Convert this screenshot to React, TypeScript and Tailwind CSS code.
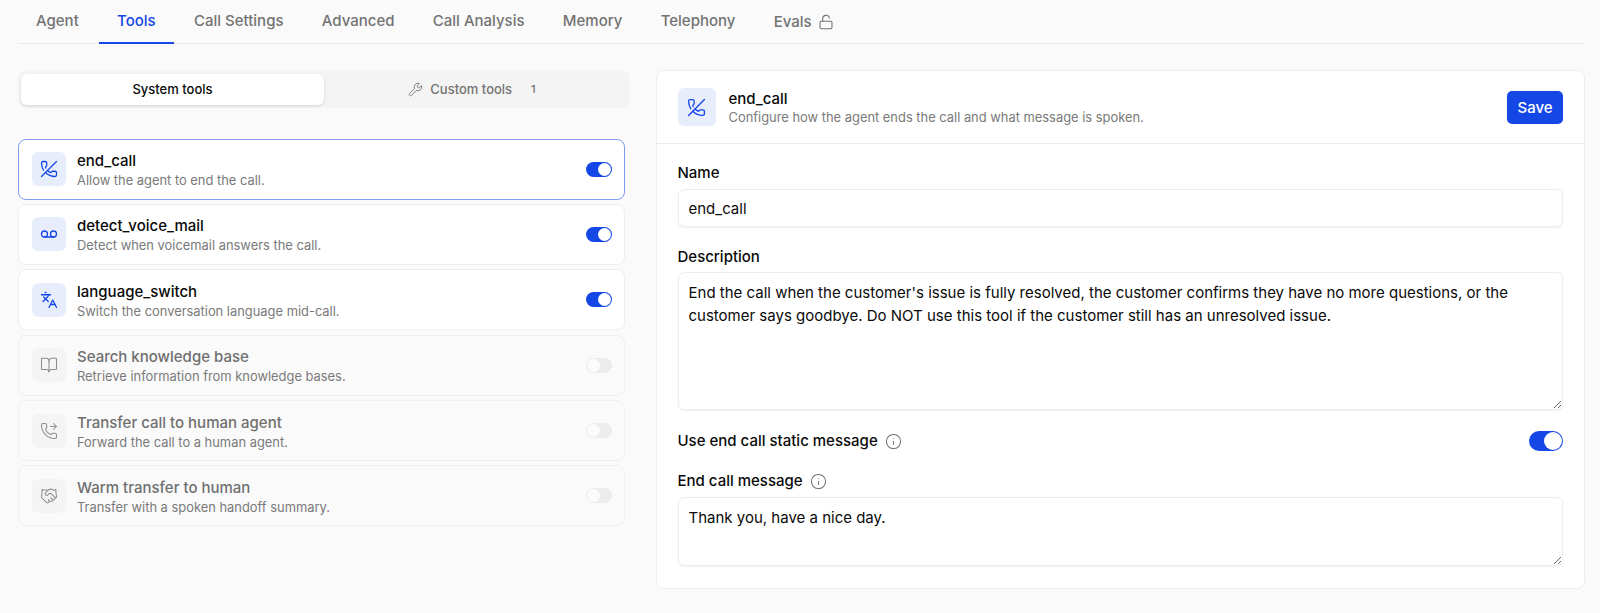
import { FC, ReactNode } from 'react';
import {
  BookOpen,
  Handshake,
  Info,
  Languages,
  LockOpen,
  PhoneForwarded,
  PhoneOff,
  Voicemail,
  Wrench,
} from 'lucide-react';

const tabs = ['Agent', 'Tools', 'Call Settings', 'Advanced', 'Call Analysis', 'Memory', 'Telephony'];

interface Tool {
  name: string;
  description: string;
  icon: ReactNode;
  enabled: boolean;
  selected?: boolean;
}

const tools: Tool[] = [
  { name: 'end_call', description: 'Allow the agent to end the call.', icon: <PhoneOff size={18} strokeWidth={1.7} />, enabled: true, selected: true },
  { name: 'detect_voice_mail', description: 'Detect when voicemail answers the call.', icon: <Voicemail size={18} strokeWidth={1.7} />, enabled: true },
  { name: 'language_switch', description: 'Switch the conversation language mid-call.', icon: <Languages size={18} strokeWidth={1.7} />, enabled: true },
  { name: 'Search knowledge base', description: 'Retrieve information from knowledge bases.', icon: <BookOpen size={18} strokeWidth={1.4} />, enabled: false },
  { name: 'Transfer call to human agent', description: 'Forward the call to a human agent.', icon: <PhoneForwarded size={18} strokeWidth={1.4} />, enabled: false },
  { name: 'Warm transfer to human', description: 'Transfer with a spoken handoff summary.', icon: <Handshake size={18} strokeWidth={1.4} />, enabled: false },
];

const SmallToggle: FC<{ on: boolean }> = ({ on }) =>
  on ? (
    <div className="flex h-[15px] w-[26px] items-center justify-end rounded-full bg-[#1447e6] p-px">
      <div className="h-[13px] w-[13px] rounded-full bg-white" />
    </div>
  ) : (
    <div className="flex h-[15px] w-[26px] items-center rounded-full bg-[#ececec] p-px">
      <div className="h-[13px] w-[13px] rounded-full bg-[#fbfbfb]" />
    </div>
  );

const ToolCard: FC<{ tool: Tool }> = ({ tool }) => (
  <div
    className={`flex h-[61px] items-center rounded-lg border pl-[13px] pr-[12px] ${
      tool.selected
        ? 'border-[#7f9cf0] bg-white'
        : tool.enabled
          ? 'border-[#eeeeee] bg-white'
          : 'border-[#f0f0f0] bg-[#fafafa]'
    }`}
  >
    <div
      className={`flex h-[34px] w-[34px] items-center justify-center rounded-md ${
        tool.enabled ? 'bg-[#e8edfc] text-[#1447e6]' : 'bg-[#f4f4f4] text-[#8e8e8e]'
      }`}
    >
      {tool.icon}
    </div>
    <div className="ml-[11px] flex-1 pt-[4px]">
      <div className={`text-[15px] font-medium leading-[19px] ${tool.enabled ? 'text-[#0a0a0a]' : 'text-[#6f6f6f]'}`}>
        {tool.name}
      </div>
      <div className="mt-px text-[12.9px] leading-[20px] text-[#7a7a7a]">{tool.description}</div>
    </div>
    <SmallToggle on={tool.enabled} />
  </div>
);

const App: FC = () => {
  return (
    <div className="h-[613px] w-[1600px] overflow-hidden bg-[#fafafa] pl-[18px] pr-[15px] font-['Inter',sans-serif]">
      <div className="flex h-[44px] gap-[2.3px] border-b border-[#ebebeb]">
        {tabs.map((tab) => (
          <div
            key={tab}
            className={`-mb-px flex h-[44px] items-center border-b-2 px-[18px] text-[15px] font-medium ${
              tab === 'Tools' ? 'border-[#1447e6] text-[#1447e6]' : 'border-transparent text-[#737373]'
            }`}
          >
            {tab}
          </div>
        ))}
        <div className="flex h-[44px] items-center gap-[6px] px-[18px] text-[15px] font-medium text-[#737373]">
          Evals
          <LockOpen size={16} strokeWidth={1.6} />
        </div>
      </div>

      <div className="mt-[26px] flex gap-[25.5px]">
        <div className="w-[612px]">
          <div className="flex h-[38px] items-center rounded-lg bg-[#f4f4f4] p-[3px]">
            <div className="flex h-[31px] w-[303px] items-center justify-center rounded-md bg-white pt-px text-[13px] font-medium text-[#0a0a0a] shadow-[0_1px_3px_rgba(0,0,0,0.14)]">
              System tools
            </div>
            <div className="flex flex-1 items-center justify-center gap-[7px] pr-[7px] pt-px text-[13px] font-medium text-[#737373]">
              <Wrench size={15} strokeWidth={1.5} />
              Custom tools
              <span className="ml-[12px] text-[11px] text-[#737373]">1</span>
            </div>
          </div>

          <div className="mt-[30.5px] flex w-[607px] flex-col gap-[4.4px]">
            {tools.map((tool) => (
              <ToolCard key={tool.name} tool={tool} />
            ))}
          </div>
        </div>

        <div className="h-[519px] w-[929.5px] rounded-lg border border-[#eeeeee] bg-white">
          <div className="flex h-[73px] items-center border-b border-[#ececec] px-[21px]">
            <div className="flex h-[38px] w-[38px] items-center justify-center rounded-md bg-[#e8edfc] text-[#1447e6]">
              <PhoneOff size={19} strokeWidth={1.7} />
            </div>
            <div className="ml-[13px] flex-1 pt-[4px]">
              <div className="text-[15px] font-medium leading-[18px] text-[#0a0a0a]">end_call</div>
              <div className="text-[12.9px] leading-[20px] text-[#7a7a7a]">
                Configure how the agent ends the call and what message is spoken.
              </div>
            </div>
            <button className="h-[33px] w-[56px] rounded-[5px] bg-[#1447e6] pt-[2px] text-[15px] font-medium text-white">
              Save
            </button>
          </div>

          <div className="px-[21px] pt-[19px]">
            <div className="text-[15px] font-medium leading-[20px] text-[#0a0a0a]">Name</div>
            <input
              readOnly
              value="end_call"
              className="mt-[6px] block h-[38px] w-full rounded-md border border-[#eeeeee] bg-white px-[10px] text-[15px] text-[#0a0a0a] shadow-[0_1px_2px_rgba(0,0,0,0.06)] outline-none"
            />

            <div className="mt-[20px] text-[15px] font-medium leading-[20px] text-[#0a0a0a]">Description</div>
            <textarea
              readOnly
              defaultValue="End the call when the customer's issue is fully resolved, the customer confirms they have no more questions, or the customer says goodbye. Do NOT use this tool if the customer still has an unresolved issue."
              className="mt-[5px] block h-[138px] w-full rounded-md border border-[#eeeeee] bg-white px-[10px] py-[8px] text-[15px] leading-[23px] text-[#0a0a0a] shadow-[0_1px_2px_rgba(0,0,0,0.06)] outline-none"
            />

            <div className="mt-[21px] flex h-[20px] items-center justify-between">
              <div className="flex items-center gap-[7px] text-[15px] font-medium text-[#0a0a0a]">
                Use end call static message
                <Info size={17} strokeWidth={1.5} className="text-[#6f6f6f]" />
              </div>
              <div className="flex h-[20px] w-[34px] items-center justify-end rounded-full bg-[#1447e6] p-px">
                <div className="h-[18px] w-[18px] rounded-full bg-white" />
              </div>
            </div>

            <div className="mt-[20px] flex items-center gap-[7px] text-[15px] font-medium leading-[20px] text-[#0a0a0a]">
              End call message
              <Info size={17} strokeWidth={1.5} className="text-[#6f6f6f]" />
            </div>
            <textarea
              readOnly
              defaultValue="Thank you, have a nice day."
              className="mt-[6px] block h-[69px] w-full rounded-md border border-[#eeeeee] bg-white px-[10px] py-[8px] text-[15px] leading-[23px] text-[#0a0a0a] shadow-[0_1px_2px_rgba(0,0,0,0.06)] outline-none"
            />
          </div>
        </div>
      </div>
    </div>
  );
};

export default App;
